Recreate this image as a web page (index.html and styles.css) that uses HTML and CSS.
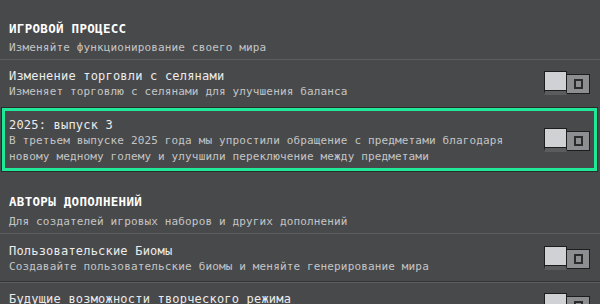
FILE: index.html
```html
<!DOCTYPE html>
<html lang="ru">
<head>
    <meta charset="UTF-8">
    <title>Экспериментальные функции</title>
    <link rel="stylesheet" href="styles.css">
</head>
<body>
    <div class="panel">
        <div class="section">
            <h2>Игровой процесс</h2>
            <p class="sub">Изменяйте функционирование своего мира</p>
        </div>

        <div class="item">
            <div class="text">
                <div class="title">Изменение торговли с селянами</div>
                <div class="sub">Изменяет торговлю с селянами для улучшения баланса</div>
            </div>
            <div class="toggle"><span class="knob"></span><span class="track"><i></i></span></div>
        </div>

        <div class="item focused">
            <div class="text">
                <div class="title">2025: выпуск 3</div>
                <div class="sub">В третьем выпуске 2025 года мы упростили обращение с предметами благодаря<br>новому медному голему и улучшили переключение между предметами</div>
            </div>
            <div class="toggle"><span class="knob"></span><span class="track"><i></i></span></div>
        </div>

        <div class="section second">
            <h2>Авторы дополнений</h2>
            <p class="sub">Для создателей игровых наборов и других дополнений</p>
        </div>

        <div class="item split">
            <div class="text">
                <div class="title">Пользовательские Биомы</div>
                <div class="sub">Создавайте пользовательские биомы и меняйте генерирование мира</div>
            </div>
            <div class="toggle"><span class="knob"></span><span class="track"><i></i></span></div>
        </div>

        <div class="item last">
            <div class="text">
                <div class="title">Будущие возможности творческого режима</div>
            </div>
            <div class="toggle"><span class="knob"></span><span class="track"><i></i></span></div>
        </div>
    </div>
</body>
</html>
```

FILE: styles.css
```css
body { margin: 0; background: #48494a; font-family: "DejaVu Sans Mono", monospace; color: #e8e8e8; overflow: hidden; }
.panel { width: 600px; height: 304px; overflow: hidden; }

.section { padding: 21px 10px 3px 9px; border-bottom: 1px solid #5c5d5e; }
.section h2 { margin: 0; font-size: 12.5px; line-height: 16px; font-weight: bold; text-transform: uppercase; letter-spacing: 0.3px; color: #ffffff; }
.section .sub { margin: 3px 0 0; }
.section.second { padding-top: 23px; }
.section.second .sub { margin-top: 4px; }

.sub { font-size: 11px; line-height: 16px; color: #c4c5c7; letter-spacing: 0.15px; }
.title { font-size: 12px; line-height: 15px; letter-spacing: 0.2px; color: #ececec; }

.item { display: flex; align-items: center; justify-content: space-between; padding: 9px 10px 8px 9px; }
.item.focused { margin: 0 3px 0 2px; padding: 7px 4px 3px 4px; border: 3px solid #1fe898; outline: 1px solid #2a2b2c; }
.item.split { padding: 10px 10px 6px 9px; border-bottom: 1px solid #333435; box-shadow: 0 1px 0 #5c5d5e; }
.item.last { padding-top: 10px; align-items: flex-start; }
.item.last .toggle { margin-top: 1px; }

.toggle { display: flex; align-items: flex-end; flex-shrink: 0; margin-top: -3px; }
.knob { width: 21px; height: 19px; background: #d0d1d4; border: 1px solid #1d1d1e; border-bottom: 4px solid #5b5c5e; box-shadow: inset 0 -1px 0 #1d1d1e; position: relative; z-index: 1; }
.track { width: 22px; height: 18px; margin-left: -1px; margin-bottom: 1px; background: #8d8e91; border: 1px solid #1d1d1e; display: flex; align-items: center; justify-content: center; }
.track i { width: 5px; height: 6px; border: 2px solid #2b2b2c; }
```
